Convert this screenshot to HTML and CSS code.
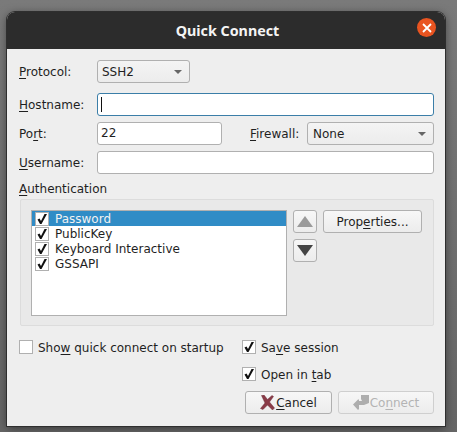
FILE: index.html
```html
<!DOCTYPE html>
<html lang="en">

<head>
    <meta charset="UTF-8">
    <title>Quick Connect</title>
    <link rel="stylesheet" href="styles.css">
</head>

<body>
    <div class="dialog">
        <div class="titlebar">
            <span class="title">Quick Connect</span>
            <span class="close">
                <svg width="10" height="10" viewBox="0 0 10 10"><path d="M1 1L9 9M9 1L1 9" stroke="#fff" stroke-width="1.8"/></svg>
            </span>
        </div>
        <div class="content">
            <div class="row">
                <label class="label"><u>P</u>rotocol:</label>
                <div class="combo combo-protocol"><span>SSH2</span><i class="caret"></i></div>
            </div>
            <div class="row row-host">
                <label class="label"><u>H</u>ostname:</label>
                <div class="input input-focus"><span class="cursor"></span></div>
            </div>
            <div class="row row-next">
                <label class="label">Po<u>r</u>t:</label>
                <div class="input input-port">22</div>
                <label class="label-firewall"><u>F</u>irewall:</label>
                <div class="combo combo-firewall"><span>None</span><i class="caret"></i></div>
            </div>
            <div class="row row-next">
                <label class="label"><u>U</u>sername:</label>
                <div class="input"></div>
            </div>
            <div class="group-title"><u>A</u>uthentication</div>
            <div class="group">
                <div class="list">
                    <div class="item selected"><span class="check"><svg width="12" height="12" viewBox="0 0 12 12"><path d="M1.5 6.5L3.5 5.5L5 8L8.5 1H11L5.5 11H4Z" fill="#111"/></svg></span><span class="text">Password</span></div>
                    <div class="item"><span class="check"><svg width="12" height="12" viewBox="0 0 12 12"><path d="M1.5 6.5L3.5 5.5L5 8L8.5 1H11L5.5 11H4Z" fill="#111"/></svg></span><span class="text">PublicKey</span></div>
                    <div class="item"><span class="check"><svg width="12" height="12" viewBox="0 0 12 12"><path d="M1.5 6.5L3.5 5.5L5 8L8.5 1H11L5.5 11H4Z" fill="#111"/></svg></span><span class="text">Keyboard Interactive</span></div>
                    <div class="item"><span class="check"><svg width="12" height="12" viewBox="0 0 12 12"><path d="M1.5 6.5L3.5 5.5L5 8L8.5 1H11L5.5 11H4Z" fill="#111"/></svg></span><span class="text">GSSAPI</span></div>
                </div>
                <div class="arrows">
                    <button class="btn btn-arrow"><svg width="16" height="11" viewBox="0 0 16 11"><path d="M8 0L16 11H0Z" fill="#9a9a9a"/></svg></button>
                    <button class="btn btn-arrow"><svg width="16" height="11" viewBox="0 0 16 11"><path d="M0 0H16L8 11Z" fill="#444"/></svg></button>
                </div>
                <button class="btn btn-props">Prop<u>e</u>rties...</button>
            </div>
            <div class="options">
                <div class="option"><span class="check"></span><span class="text">Sho<u>w</u> quick connect on startup</span></div>
                <div class="options-right">
                    <div class="option"><span class="check"><svg width="12" height="12" viewBox="0 0 12 12"><path d="M1.5 6.5L3.5 5.5L5 8L8.5 1H11L5.5 11H4Z" fill="#111"/></svg></span><span class="text">Sa<u>v</u>e session</span></div>
                    <div class="option"><span class="check"><svg width="12" height="12" viewBox="0 0 12 12"><path d="M1.5 6.5L3.5 5.5L5 8L8.5 1H11L5.5 11H4Z" fill="#111"/></svg></span><span class="text">Open in <u>t</u>ab</span></div>
                </div>
            </div>
            <div class="actions">
                <button class="btn btn-cancel">
                    <svg width="15" height="15" viewBox="0 0 15 15"><path d="M1.5 0.5L4 0L7.5 4.5L12 0.5L13.5 1.5L9.5 7L14.5 13L12.5 15L7.5 10L3 14.5L0.5 13.5L5 8Z" fill="#8a3b48" stroke="#70303b" stroke-width="0.5"/></svg>
                    <span><u>C</u>ancel</span>
                </button>
                <button class="btn btn-connect" disabled>
                    <svg width="16" height="15" viewBox="0 0 16 15"><path d="M8 0H16V8L11 10H6V14L5 15L0 9.5L5 4.5H6V6H9L8 4Z" fill="#aeaeae"/></svg>
                    <span>Co<u>n</u>nect</span>
                </button>
            </div>
        </div>
    </div>
</body>

</html>
```

FILE: styles.css
```css
html,
body {
    height: 100%;
}

body {
    margin: 0;
    overflow: hidden;
    background: linear-gradient(180deg, #7a7a7a 0%, #666 100%);
    font-family: "DejaVu Sans", sans-serif;
    font-size: 12px;
    color: #1f1f1f;
}

u {
    text-underline-offset: 2px;
}

.dialog {
    margin: 12px 0 0 7px;
    width: 438px;
    height: 414px;
    background-color: #eeeeee;
    border-radius: 8px 8px 0 0;
    box-shadow: 0 0 0 1px #2e2e2e, 0 2px 10px rgba(0, 0, 0, 0.5);
    overflow: hidden;
}

.titlebar {
    height: 37px;
    padding-left: 3px;
    background-color: #2c2c2c;
    display: flex;
    align-items: center;
    justify-content: center;
    position: relative;
}

.title {
    color: #f4f4f4;
    font-family: "Noto Sans", sans-serif;
    font-size: 14.3px;
    font-weight: 700;
}

.close {
    position: absolute;
    right: 9px;
    top: 6px;
    width: 19px;
    height: 19px;
    border-radius: 50%;
    background-color: #e95420;
    display: flex;
    align-items: center;
    justify-content: center;
}

.content {
    padding: 11px 11px 0 12px;
}

.row {
    display: flex;
    align-items: center;
    height: 23px;
}

.row-host {
    margin-top: 10px;
}

.row-next {
    margin-top: 6px;
}

.label {
    width: 78px;
    flex: none;
}

.input {
    flex: 1;
    height: 23px;
    line-height: 21px;
    padding-left: 3px;
    box-sizing: border-box;
    background-color: #fff;
    border: 1px solid #b0b0b0;
    border-radius: 3px;
}

.input-focus {
    border-color: #3b7ea8;
    display: flex;
    align-items: center;
}

.cursor {
    width: 1px;
    height: 15px;
    background-color: #111;
}

.input-port {
    flex: none;
    width: 125px;
}

.label-firewall {
    margin-left: 28px;
    width: 57px;
}

.combo {
    display: flex;
    align-items: center;
    justify-content: space-between;
    height: 23px;
    box-sizing: border-box;
    padding: 0 7px 0 4px;
    background: linear-gradient(180deg, #f4f4f4, #ececec);
    border: 1px solid #b0b0b0;
    border-radius: 3px;
}

.combo-protocol {
    width: 93px;
}

.combo-firewall {
    flex: 1;
    padding-left: 5px;
}

.caret {
    width: 0;
    height: 0;
    border-left: 4px solid transparent;
    border-right: 4px solid transparent;
    border-top: 4px solid #666;
}

.group-title {
    margin-top: 5px;
    height: 19px;
    line-height: 21px;
}

.group {
    margin: 1px 0 0 1px;
    height: 127px;
    box-sizing: border-box;
    padding: 10px 11px 0 10px;
    display: flex;
    align-items: flex-start;
    background-color: #e9e9e9;
    border: 1px solid #dcdcdc;
    border-radius: 2px;
}

.list {
    width: 256px;
    height: 106px;
    box-sizing: border-box;
    flex: none;
    background-color: #fff;
    border: 1px solid #b0b0b0;
}

.item {
    display: flex;
    align-items: center;
    height: 15px;
    line-height: 15px;
}

.item.selected {
    background-color: #308cc6;
    color: #f2f2f2;
}

.text {
    padding-top: 1px;
}

.check {
    width: 14px;
    height: 14px;
    box-sizing: border-box;
    flex: none;
    margin: 0 6px 0 3px;
    background-color: #fff;
    border: 1px solid #b0b0b0;
    display: inline-flex;
    align-items: center;
    justify-content: center;
}

.arrows {
    margin-left: 6px;
    display: flex;
    flex-direction: column;
    gap: 6px;
}

.btn {
    font-family: inherit;
    font-size: 12px;
    color: #1f1f1f;
    background: linear-gradient(180deg, #f7f7f7, #ececec);
    border: 1px solid #b0b0b0;
    border-radius: 3px;
    padding: 0;
    height: 23px;
    box-sizing: border-box;
}

.btn-arrow {
    width: 24px;
    display: flex;
    align-items: center;
    justify-content: center;
}

.btn-props {
    margin-left: 6px;
    width: 99px;
}

.options {
    margin-top: 13px;
    display: flex;
    justify-content: space-between;
}

.options-right {
    width: 192px;
    display: flex;
    flex-direction: column;
    gap: 11px;
}

.option {
    display: flex;
    align-items: center;
    height: 16px;
}

.option .check {
    margin: 0 5px 0 0;
}

.actions {
    margin-top: 9px;
    display: flex;
    justify-content: flex-end;
    gap: 6px;
}

.btn-cancel,
.btn-connect {
    display: flex;
    align-items: center;
    justify-content: center;
    gap: 1px;
}

.btn-cancel {
    width: 87px;
}

.btn-connect {
    width: 96px;
    color: #b4b4b4;
    border-color: #cfcfcf;
}
```
